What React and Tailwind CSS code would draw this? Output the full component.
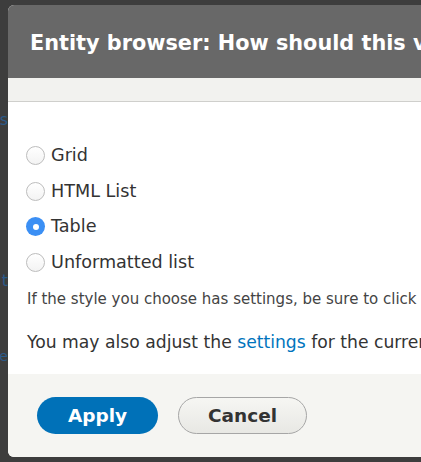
import React from 'react'

const options = [
	{ label: 'Grid', checked: false },
	{ label: 'HTML List', checked: false },
	{ label: 'Table', checked: true },
	{ label: 'Unformatted list', checked: false },
]

function Radio({ checked }) {
	if (checked) {
		return (
			<span className="flex h-[19px] w-[19px] shrink-0 items-center justify-center rounded-full bg-[#3b8ff4]">
				<span className="h-[6px] w-[6px] rounded-full bg-white" />
			</span>
		)
	}
	return <span className="h-[19px] w-[19px] shrink-0 rounded-full border border-[#bdbdbd] bg-gradient-to-b from-white to-[#f3f3f3]" />
}

export default function App() {
	return (
		<div className="flex h-[462px] w-[421px] overflow-hidden bg-[#3d3d3d] font-['DejaVu_Sans',sans-serif]">
			<div className="flex w-[8px] shrink-0 flex-col items-end overflow-hidden text-[16px] leading-none text-[#2b5a8a]">
				<span className="mt-[112px]">s</span>
				<span className="mt-[145px]">t</span>
				<span className="mt-[60px] text-[14px]">se</span>
			</div>
			<div className="my-[5px] flex flex-1 flex-col overflow-hidden rounded-l-[6px] bg-white">
				<div className="flex h-[73px] shrink-0 items-center whitespace-nowrap bg-[#686868] pl-[22px] pt-[4px] text-[20.8px] font-bold text-white">
					Entity browser: How should this view be styled
				</div>
				<div className="h-[24px] shrink-0 border-b border-[#cfcfcc] bg-[#f2f2ef]" />
				<div className="flex h-[272px] shrink-0 flex-col whitespace-nowrap pl-[18px] pt-[36px] text-[#333]">
					{options.map((o) => (
						<div key={o.label} className="flex h-[35.5px] items-center gap-[6px] text-[17.6px]">
							<Radio checked={o.checked} />
							<span className="-mt-[1px]">{o.label}</span>
						</div>
					))}
					<p className="mt-[8px] pl-[1px] text-[15px] leading-[22px] text-[#444]">If the style you choose has settings, be sure to click the settings button</p>
					<p className="mt-[20px] pl-[1px] text-[17.2px] leading-[25px] text-[#333]">
						You may also adjust the <span className="text-[#0074bd]">settings</span> for the currently selected style.
					</p>
				</div>
				<div className="flex flex-1 items-center gap-[20px] bg-[#f5f5f2] pl-[29px]">
					<button type="button" className="flex h-[37px] w-[121px] items-center justify-center rounded-full bg-[#0071b8] text-[18.5px] font-bold text-white">Apply</button>
					<button type="button" className="flex h-[37px] w-[129px] items-center justify-center rounded-full border border-[#a6a6a6] bg-gradient-to-b from-[#f6f6f3] to-[#e8e8e4] text-[18.5px] font-bold text-[#333]">Cancel</button>
				</div>
			</div>
		</div>
	)
}
